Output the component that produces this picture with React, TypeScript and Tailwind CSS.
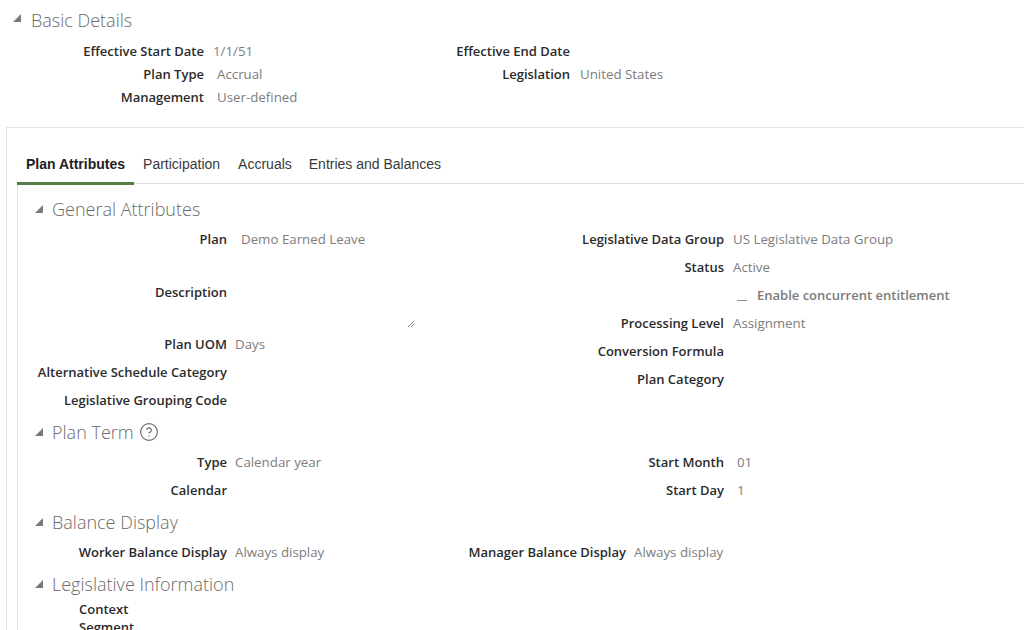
import React from "react";
import { CircleHelp } from "lucide-react";

const Tri = () => (
  <svg width="8" height="8" viewBox="0 0 8 8" className="shrink-0">
    <polygon points="0,8 8,8 8,0" fill="#7a7a7a" />
  </svg>
);

const Header = ({ title, extra, pad }: { title: string; extra?: React.ReactNode; pad: string }) => (
  <div className={`flex items-center h-[34px] ${pad}`}>
    <Tri />
    <span className="ml-[9px] text-[18px] font-light text-[#6b6b6b] leading-none">{title}</span>
    {extra}
  </div>
);

const Row = ({
  label,
  value,
  lw,
  vp,
  h = "h-[28px]",
}: {
  label: string;
  value?: React.ReactNode;
  lw: string;
  vp: string;
  h?: string;
}) => (
  <div className={`flex items-center ${h}`}>
    <div className={`${lw} shrink-0 text-right text-[13px] font-semibold text-[#2b2b2b]`}>{label}</div>
    <div className={`${vp} text-[13.3px] font-medium text-[#7d7d7d] whitespace-nowrap`}>{value}</div>
  </div>
);

export default function App() {
  return (
    <div
      className="w-[1024px] h-[630px] overflow-hidden bg-white"
      style={{ fontFamily: '"Open Sans", "Noto Sans", sans-serif' }}
    >
      {/* Basic Details */}
      <div className="flex items-center h-[40px] pl-[13px]">
        <svg width="8" height="8" viewBox="0 0 8 8" className="shrink-0 -mt-[4px]">
          <polygon points="0,8 8,8 8,0" fill="#7a7a7a" />
        </svg>
        <span className="ml-[10px] text-[18px] font-light text-[#6b6b6b] leading-none">Basic Details</span>
      </div>
      <div className="flex">
        <div className="w-[370px]">
          <Row h="h-[23px]" lw="w-[204px]" vp="pl-[9px]" label="Effective Start Date" value="1/1/51" />
          <Row h="h-[23px]" lw="w-[204px]" vp="pl-[13px]" label="Plan Type" value="Accrual" />
          <Row h="h-[23px]" lw="w-[204px]" vp="pl-[13px]" label="Management" value="User-defined" />
        </div>
        <div>
          <Row h="h-[23px]" lw="w-[200px]" vp="pl-[10px]" label="Effective End Date" value="" />
          <Row h="h-[23px]" lw="w-[200px]" vp="pl-[10px]" label="Legislation" value="United States" />
        </div>
      </div>

      {/* Card */}
      <div className="mt-[18px] ml-[6px] border-t border-l border-[#e4e4e4] pt-[18px] pl-[10px]">
        <div
          className="flex h-[38px] border-b border-[#dedede] text-[14px]"
          style={{ fontFamily: '"Liberation Sans", Arial, sans-serif' }}
        >
          <div className="relative flex items-center px-[9px] font-bold text-[#222]">
            Plan Attributes
            <div className="absolute left-0 right-0 -bottom-[2px] h-[3px] bg-[#557d43]" />
          </div>
          <div className="flex items-center px-[9px] text-[#3a3a3a]">Participation</div>
          <div className="flex items-center px-[9px] text-[#3a3a3a]">Accruals</div>
          <div className="flex items-center pl-[8px] pr-[9px] text-[#3a3a3a]">Entries and Balances</div>
        </div>

        <div className="border-l border-[#e4e4e4] pt-[8px] h-[460px]">
          {/* General Attributes */}
          <Header title="General Attributes" pad="pl-[17px]" />
          <div className="flex">
            <div className="w-[462px] shrink-0">
              <Row lw="w-[209px]" vp="pl-[14px]" label="Plan" value="Demo Earned Leave" />
              <div className="flex items-center h-[77px]">
                <div className="w-[209px] shrink-0 text-right text-[13px] font-semibold text-[#2b2b2b]">Description</div>
                <div className="ml-[8px] w-[180px] h-full flex items-end justify-end pb-[3px]">
                  <svg width="8" height="8" viewBox="0 0 8 8">
                    <line x1="1" y1="7" x2="7" y2="1" stroke="#8a8a8a" strokeWidth="1" />
                    <line x1="4" y1="7" x2="7" y2="4" stroke="#8a8a8a" strokeWidth="1" />
                  </svg>
                </div>
              </div>
              <Row lw="w-[209px]" vp="pl-[8px]" label="Plan UOM" value="Days" />
              <Row lw="w-[209px]" vp="pl-[8px]" label="Alternative Schedule Category" />
              <Row lw="w-[209px]" vp="pl-[8px]" label="Legislative Grouping Code" />
            </div>
            <div>
              <Row lw="w-[244px]" vp="pl-[9px]" label="Legislative Data Group" value="US Legislative Data Group" />
              <Row lw="w-[244px]" vp="pl-[9px]" label="Status" value="Active" />
              <div className="flex items-center h-[28px] pl-[257px]">
                <span className="w-[10px] h-px bg-[#8a8a8a] mt-[9px]" />
                <span className="ml-[10px] text-[13px] font-semibold text-[#7b7b7b]">Enable concurrent entitlement</span>
              </div>
              <Row lw="w-[244px]" vp="pl-[9px]" label="Processing Level" value="Assignment" />
              <Row lw="w-[244px]" vp="pl-[9px]" label="Conversion Formula" />
              <Row lw="w-[244px]" vp="pl-[9px]" label="Plan Category" />
            </div>
          </div>

          {/* Plan Term */}
          <Header
            title="Plan Term"
            pad="pl-[17px]"
            extra={<CircleHelp size={20} strokeWidth={1.4} color="#6b6b6b" className="ml-[5px]" />}
          />
          <div className="flex">
            <div className="w-[462px] shrink-0">
              <Row lw="w-[209px]" vp="pl-[8px]" label="Type" value="Calendar year" />
              <Row lw="w-[209px]" vp="pl-[8px]" label="Calendar" />
            </div>
            <div>
              <Row lw="w-[244px]" vp="pl-[13px]" label="Start Month" value="01" />
              <Row lw="w-[244px]" vp="pl-[13px]" label="Start Day" value="1" />
            </div>
          </div>

          {/* Balance Display */}
          <Header title="Balance Display" pad="pl-[17px]" />
          <div className="flex">
            <div className="w-[322px] shrink-0">
              <Row lw="w-[209px]" vp="pl-[8px]" label="Worker Balance Display" value="Always display" />
            </div>
            <div>
              <Row lw="w-[286px]" vp="pl-[8px]" label="Manager Balance Display" value="Always display" />
            </div>
          </div>

          {/* Legislative Information */}
          <Header title="Legislative Information" pad="pl-[17px]" />
          <div className="pl-[61px] text-[13px] font-semibold text-[#2b2b2b]">
            <div className="h-[18px] flex items-center">Context</div>
            <div className="h-[18px] flex items-center">Segment</div>
          </div>
        </div>
      </div>
    </div>
  );
}
